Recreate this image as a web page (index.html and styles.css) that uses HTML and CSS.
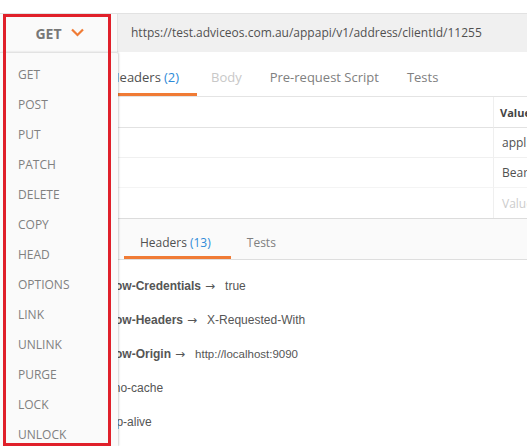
FILE: index.html
```html
<!DOCTYPE html>
<html>
<head>
<meta charset="utf-8">
<link rel="stylesheet" href="styles.css">
</head>
<body>
<div class="page">
  <div class="reqbar">
    <div class="method">
      <span class="method-label">GET</span>
      <svg class="chev" width="13" height="9" viewBox="0 0 13 9"><path d="M1 1.5 L6.5 7 L12 1.5" fill="none" stroke="#f07b35" stroke-width="2.2"/></svg>
    </div>
    <div class="url">https://test.adviceos.com.au/appapi/v1/address/clientId/11255</div>
  </div>

  <div class="tabs">
    <div class="tab active">Headers <span class="count">(2)</span></div>
    <div class="tab disabled">Body</div>
    <div class="tab">Pre-request Script</div>
    <div class="tab">Tests</div>
  </div>

  <div class="table">
    <div class="cell head"></div><div class="cell vcol head-val">Value</div>
    <div class="cell r1"></div><div class="cell vcol r1">application/json</div>
    <div class="cell r2"></div><div class="cell vcol r2">Bearer</div>
    <div class="cell r3"></div><div class="cell vcol r3 placeholder">Value</div>
  </div>

  <div class="rtabs">
    <div class="tab active">Headers <span class="count">(13)</span></div>
    <div class="tab">Tests</div>
  </div>

  <div class="rlist">
    <div class="rrow"><span class="key">Access-Control-Allow-Credentials</span><span class="arrow">→</span><span class="val">true</span></div>
    <div class="rrow"><span class="key">Access-Control-Allow-Headers</span><span class="arrow">→</span><span class="val">X-Requested-With</span></div>
    <div class="rrow"><span class="key">Access-Control-Allow-Origin</span><span class="arrow">→</span><span class="val small">http://localhost:9090</span></div>
    <div class="rrow"><span class="key">Cache-Control</span><span class="arrow">→</span><span class="val">no-cache</span></div>
    <div class="rrow"><span class="key">Connection</span><span class="arrow">→</span><span class="val">keep-alive</span></div>
  </div>

  <div class="dropdown">
    <div class="item">GET</div>
    <div class="item">POST</div>
    <div class="item">PUT</div>
    <div class="item">PATCH</div>
    <div class="item">DELETE</div>
    <div class="item">COPY</div>
    <div class="item">HEAD</div>
    <div class="item">OPTIONS</div>
    <div class="item">LINK</div>
    <div class="item">UNLINK</div>
    <div class="item">PURGE</div>
    <div class="item">LOCK</div>
    <div class="item">UNLOCK</div>
  </div>

  <div class="highlight"></div>
</div>
</body>
</html>
```

FILE: styles.css
```css
html, body {
  margin: 0;
  padding: 0;
  background: #ffffff;
  overflow: hidden;
}
body {
  font-family: "Open Sans", "Liberation Sans", sans-serif;
  font-size: 12px;
  color: #808080;
}
.page {
  position: relative;
  width: 527px;
  height: 446px;
  padding-top: 13px;
  box-sizing: border-box;
}
.reqbar {
  display: flex;
  height: 39px;
  border-top: 1px solid #e2e2e2;
  background: #f0f0f0;
  box-sizing: border-box;
}
.method {
  width: 118px;
  flex: none;
  display: flex;
  align-items: center;
  justify-content: center;
  gap: 9px;
  background: #fafafa;
  border-right: 1px solid #e4e4e4;
  box-sizing: border-box;
}
.method-label {
  font-weight: 700;
  font-size: 14px;
  color: #777777;
  padding-left: 2px;
}
.chev { display: block; margin-top: -2px; }
.url {
  display: flex;
  align-items: center;
  padding-left: 13px;
  padding-bottom: 1px;
  font-size: 12px;
  color: #505050;
  white-space: nowrap;
}
.tabs {
  display: flex;
  height: 44px;
  padding-left: 96px;
  border-bottom: 1px solid #e4e4e4;
  box-sizing: content-box;
}
.tab {
  display: flex;
  align-items: center;
  padding: 0 14px;
  padding-top: 9px;
  font-size: 13px;
  color: #808080;
  border-bottom: 3px solid transparent;
  white-space: nowrap;
}
.tab.active {
  color: #505050;
  border-bottom-color: #f07b35;
  padding-right: 18px;
}
.tab.disabled { color: #c8c8c8; }
.count { color: #2e8ad8; margin-left: 3px; }
.table {
  display: grid;
  grid-template-columns: 1fr 34px;
  grid-template-rows: 31px 30px 30px 30px;
  border-bottom: 1px solid #dcdcdc;
}
.cell {
  display: flex;
  align-items: center;
  font-size: 12px;
  color: #505050;
  white-space: nowrap;
  overflow: hidden;
}
.vcol {
  border-left: 1px solid #efefef;
  padding-left: 8px;
}
.head, .head-val { border-bottom: 1px solid #e2e2e2; }
.head-val { font-weight: 700; font-size: 11px; color: #444; padding-left: 6px; }
.r1 { border-bottom: 1px solid #f0f0f0; }
.r2 { border-bottom: 1px solid #f4f4f4; }
.placeholder { color: #cccccc; }
.rtabs {
  display: flex;
  height: 40px;
  padding-left: 124px;
  background: #fafafa;
  border-bottom: 1px solid #dedede;
  box-sizing: content-box;
}
.rtabs .tab {
  font-size: 12px;
  padding: 9px 16px 0;
}
.rtabs .tab.active { padding-right: 20px; }
.rtabs .count { margin-left: 3px; }
.rlist {
  padding: 9px 0 0 7px;
  font-family: "Liberation Sans", Arial, sans-serif;
  font-size: 12px;
  color: #505050;
}
.rrow {
  height: 34px;
  display: flex;
  align-items: center;
  white-space: nowrap;
}
.key { font-weight: 700; color: #555; }
.arrow {
  font-family: "DejaVu Sans", sans-serif;
  font-size: 12px;
  margin: 0 10px 0 4px;
  color: #555;
}
.val { color: #555; }
.val.small { font-size: 11.5px; }
.dropdown {
  position: absolute;
  left: 0;
  top: 52px;
  width: 118px;
  bottom: 0;
  background: #fafafa;
  border-top: 1px solid #e2e2e2;
  box-shadow: 1px 0 2px rgba(0, 0, 0, 0.18);
  border-top-right-radius: 2px;
  padding-top: 7px;
  box-sizing: border-box;
}
.item {
  height: 30px;
  line-height: 30px;
  padding-left: 18px;
  font-size: 12px;
  color: #808080;
}
.highlight {
  position: absolute;
  left: 3px;
  top: 14px;
  width: 108px;
  height: 432px;
  border: 3px solid #e0202a;
  box-sizing: border-box;
}
```
